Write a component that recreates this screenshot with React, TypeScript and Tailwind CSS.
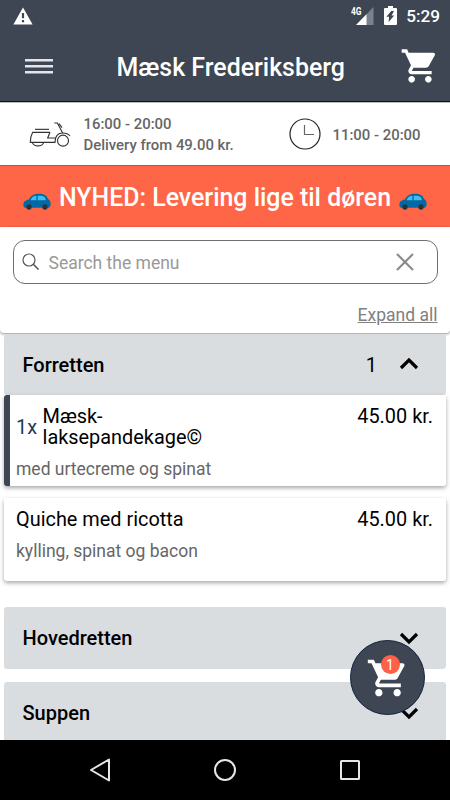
import { type ReactNode } from 'react';

const CART_PATH =
  'M7 18c-1.1 0-1.99.9-1.99 2S5.9 22 7 22s2-.9 2-2-.9-2-2-2zM1 2v2h2l3.6 7.59-1.35 2.45c-.16.28-.25.61-.25.96 0 1.1.9 2 2 2h12v-2H7.42c-.14 0-.25-.11-.25-.25l.03-.12.9-1.63h7.45c.75 0 1.41-.41 1.75-1.03l3.58-6.49c.08-.14.12-.31.12-.48 0-.55-.45-1-1-1H5.21l-.94-2H1zm16 16c-1.1 0-1.99.9-1.99 2s.89 2 1.99 2 2-.9 2-2-.9-2-2-2z';

function CartIcon({ className = '' }: { className?: string }) {
  return (
    <svg viewBox="0 0 24 24" fill="currentColor" className={className}>
      <path d={CART_PATH} />
    </svg>
  );
}

function ScooterIcon() {
  return (
    <svg
      viewBox="84 60 132 81"
      className="w-11 h-[27px] flex-shrink-0"
      fill="none"
      stroke="#333"
      strokeWidth="3.4"
    >
      <path d="M105 85h42" />
      <path d="M150 94H98c-5 9-7 19-7 30h74c0-18 9-28 24-28 9 0 16 3 21 9" />
      <path d="M150 94l-7 17h23" />
      <path d="M163 66h9l16 30M177 68l9 12" />
      <path d="M97 125c5 13 29 13 34 0" />
      <circle cx="189" cy="119" r="16.5" />
    </svg>
  );
}

function ClockIcon() {
  return (
    <svg viewBox="0 0 32 32" className="w-8 h-8 flex-shrink-0" fill="none">
      <circle cx="16" cy="16" r="15" stroke="#222" strokeWidth="1.2" />
      <path d="M15.5 7v9.5H25" stroke="#666" strokeWidth="1.2" />
    </svg>
  );
}

function CarIcon() {
  return (
    <svg viewBox="0 0 84 51" className="mt-[9px] w-7 h-[17px] flex-shrink-0">
      <path
        d="M1 35c0-8 5-13 17-16C25 7 32 2 49 2c14 0 22 4 26 16 6 3 8 8 8 16 0 7-3 10-8 10H8c-5 0-7-3-7-9z"
        fill="#0369a5"
      />
      <path d="M24 19c4-8 9-11 16-11v14H26c-3 0-3-1-2-3z" fill="#3dbdf2" />
      <path d="M44 8h8c9 0 14 3 16 10 1 3 0 4-3 4H44z" fill="#3dbdf2" />
      <circle cx="18" cy="42" r="8" fill="#2b3338" />
      <circle cx="66" cy="42" r="8" fill="#2b3338" />
    </svg>
  );
}

function StatusBar() {
  return (
    <div className="flex h-8 items-center text-white">
      <svg viewBox="0 0 20 18" className="ml-[12.5px] w-5 h-[18px]">
        <path d="M10 0.6L19.6 17.4H.4z" fill="#fff" strokeLinejoin="round" />
        <path d="M8.9 6h2.2v5.2H8.9zM8.9 13h2.2v2.2H8.9z" fill="#3d4652" />
      </svg>
      <div className="ml-auto flex items-center">
        <span className="-mt-[8px] w-3 origin-left scale-x-[0.84] text-[10px] font-bold leading-none">4G</span>
        <svg viewBox="0 0 18 18" className="-ml-[7px] w-[18px] h-[18px]">
          <path d="M17.5 0v18H0z" fill="#7c828b" />
          <path d="M10.5 7.2V18H0z" fill="#fff" />
        </svg>
        <svg viewBox="0 0 13 19" className="-mt-px ml-[10px] w-[13px] h-[19px]">
          <path d="M4 0h5v2h3q1 0 1 1v15q0 1-1 1H1q-1 0-1-1V3q0-1 1-1h3z" fill="#fff" />
          <path d="M7.2 5L2.4 10.8h2.7L4.6 16l5.6-6.6H7.6L10 5z" fill="#3d4652" />
        </svg>
        <span className="ml-[9px] mr-[10px] mt-px text-[17.2px] font-medium leading-none">5:29</span>
      </div>
    </div>
  );
}

function Header() {
  return (
    <header className="h-[103px] border-b border-[#b8bbbf] bg-[#3d4652]">
      <div className="h-[102px] border-b border-[#0c1420]">
        <StatusBar />
        <div className="flex h-[69px] items-center justify-between pl-[25px] pr-[9.5px] text-white">
          <div className="flex flex-col gap-[3px]">
            <div className="h-[3px] w-7 border-b border-[#8f95a4] bg-[#e4e4ea]" />
            <div className="h-[3px] w-7 border-b border-[#8f95a4] bg-[#e4e4ea]" />
            <div className="h-[3px] w-7 border-b border-[#8f95a4] bg-[#e4e4ea]" />
          </div>
          <h1 className="ml-[8px] mt-[3px] text-[24.9px] font-medium">Mæsk Frederiksberg</h1>
          <CartIcon className="-mt-px w-10 h-10" />
        </div>
      </div>
    </header>
  );
}

function OpeningHours() {
  return (
    <div className="flex h-[62px] items-center pl-7 text-[14.9px] font-medium leading-[20.5px] text-[#666]">
      <ScooterIcon />
      <div className="ml-[11.5px] mt-px w-[205px]">
        <p>16:00 - 20:00</p>
        <p>Delivery from 49.00 kr.</p>
      </div>
      <ClockIcon />
      <p className="ml-3 mt-[2px]">11:00 - 20:00</p>
    </div>
  );
}

function Chevron({ up = false }: { up?: boolean }) {
  return (
    <svg viewBox="0 0 20 14" className="-mt-px w-5 h-[14px]" fill="none" stroke="#000" strokeWidth="3.2">
      <path d={up ? 'M2 11l8-8 8 8' : 'M2 3l8 8 8-8'} />
    </svg>
  );
}

interface CategoryProps {
  title: string;
  count?: number;
  open?: boolean;
  className?: string;
}

function Category({ title, count, open = false, className = '' }: CategoryProps) {
  return (
    <div
      className={`mx-1 flex flex-shrink-0 items-center justify-between rounded-[3px] bg-[#dadde0] pl-[18.5px] pr-[27.5px] text-[20px] font-medium text-black ${className}`}
    >
      <span>{title}</span>
      <div className="flex items-center gap-[21.5px]">
        {count && <span className="font-normal">{count}</span>}
        <Chevron up={open} />
      </div>
    </div>
  );
}

interface DishProps {
  name: ReactNode;
  description: string;
  price: string;
  quantity?: number;
  className?: string;
}

function Dish({ name, description, price, quantity, className = '' }: DishProps) {
  return (
    <div
      className={`mx-1 flex-shrink-0 rounded-[3px] bg-white pr-[13px] shadow-[0_2px_4px_rgba(0,0,0,0.35)] ${className}`}
    >
      <div className="flex items-start justify-between text-[19.9px] leading-[21px] text-black">
        <div className="flex items-center">
          {quantity && <span className="mr-[5.5px] text-[#1f3a5c]">{quantity}x</span>}
          <span>{name}</span>
        </div>
        <span>{price}</span>
      </div>
      <p className="mt-[10px] text-[17.5px] leading-[22px] text-[#666]">{description}</p>
    </div>
  );
}

function NavigationBar() {
  return (
    <nav className="flex h-[60px] items-center bg-black pl-[89px]">
      <svg viewBox="0 0 272 26" className="w-[272px] h-[26px]" fill="none" stroke="#e6e6e6" strokeWidth="2">
        <path d="M20 2.5v21L2 13z" strokeLinejoin="round" />
        <circle cx="136" cy="13" r="10" />
        <rect x="252" y="4" width="18" height="18" rx="0.5" />
      </svg>
    </nav>
  );
}

export default function App() {
  return (
    <div className="relative flex h-[800px] w-[450px] flex-col overflow-hidden bg-white font-['Roboto',sans-serif]">
      <Header />
      <OpeningHours />

      <div className="flex h-[62px] items-center justify-center gap-2 border-t border-[#f5390f] bg-[#ff6648] text-[24.9px] font-medium text-white">
        <CarIcon />
        <span className="mt-[2px] whitespace-nowrap">NYHED: Levering lige til døren</span>
        <CarIcon />
      </div>

      <div className="h-[106px] rounded-b-[4px] px-[12.5px] pt-[13px] shadow-[0_1px_3px_rgba(0,0,0,0.45)]">
        <div className="flex h-[43.5px] items-center rounded-[12px] border border-[#707070] pl-[8.5px] pr-[23px]">
          <svg viewBox="0 0 18 18" className="w-[18px] h-[18px]" fill="none" stroke="#555">
            <circle cx="7" cy="7" r="6" strokeWidth="1.2" />
            <path d="M11.3 11.3l5.2 5.2" strokeWidth="1.6" />
          </svg>
          <span className="ml-[8.5px] mt-[2px] text-[17.5px] text-[#999]">Search the menu</span>
          <svg viewBox="0 0 18 18" className="ml-auto w-[18px] h-[18px]" stroke="#8c8c8c" strokeWidth="2.2">
            <path d="M1 1l16 16M17 1L1 17" />
          </svg>
        </div>
        <p className="mt-[18.5px] text-right text-[17.5px] leading-[26px] text-[#808080] underline">Expand all</p>
      </div>

      <main className="flex h-[407px] flex-col overflow-hidden pt-px">
        <Category title="Forretten" count={1} open className="h-[61px]" />
        <Dish
          quantity={1}
          name={
            <>
              Mæsk-
              <br />
              laksepandekage©
            </>
          }
          description="med urtecreme og spinat"
          price="45.00 kr."
          className="h-[91px] border-l-[6px] border-[#3d4652] pl-[6px] pt-[11px]"
        />
        <Dish
          name="Quiche med ricotta"
          description="kylling, spinat og bacon"
          price="45.00 kr."
          className="mt-3 h-[83px] pl-[12px] pt-[11px]"
        />
        <Category title="Hovedretten" className="mt-[26px] h-[62px]" />
        <Category title="Suppen" className="mt-[13px] h-[62px]" />
      </main>

      <NavigationBar />

      {/* Floating basket */}
      <button className="absolute left-[350px] top-[640px] flex h-[75px] w-[75px] items-center justify-center rounded-full border border-[#12233f] bg-[#3d4652] text-white">
        <CartIcon className="h-[44px] w-[44px] flex-shrink-0" />
        <span className="absolute left-[29.5px] top-[14px] flex h-[19px] w-[19px] items-center justify-center rounded-full bg-[#ff6048] text-[14px] leading-none">
          1
        </span>
      </button>
    </div>
  );
}
